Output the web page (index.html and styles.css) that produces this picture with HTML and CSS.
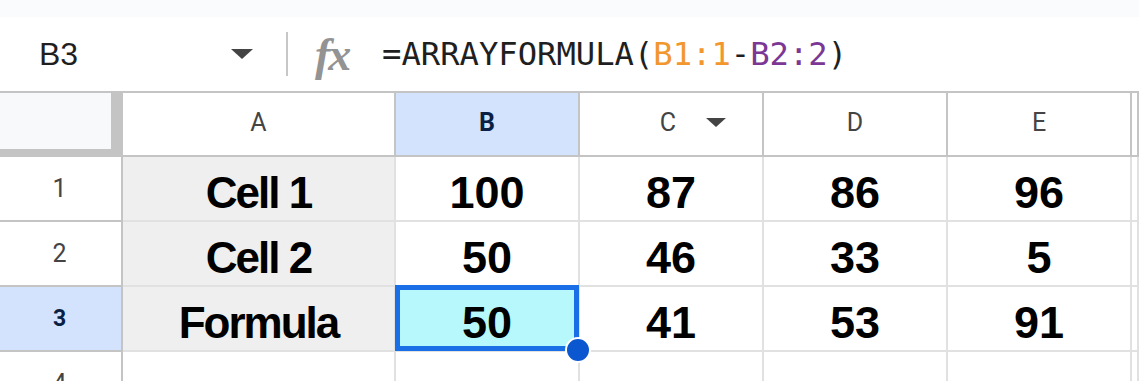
FILE: index.html
```html
<!DOCTYPE html>
<html lang="en">
<head>
    <meta charset="UTF-8">
    <meta name="viewport" content="width=device-width, initial-scale=1.0">
    <title>Sheet</title>
    <link rel="stylesheet" href="styles.css">
</head>
<body>
    <div class="top-strip"></div>

    <div class="formula-bar">
        <div class="name-box">
            <span class="cell-ref">B3</span>
            <span class="caret"></span>
        </div>
        <div class="divider"></div>
        <div class="fx">fx</div>
        <div class="formula">=ARRAYFORMULA(<span class="ref-orange">B1:1</span>-<span class="ref-purple">B2:2</span>)</div>
    </div>

    <div class="sheet">
        <div class="corner"></div>
        <div class="col-head">A</div>
        <div class="col-head active">B</div>
        <div class="col-head filter">C <span class="caret small"></span></div>
        <div class="col-head">D</div>
        <div class="col-head">E</div>
        <div class="col-head"></div>

        <div class="row-head">1</div>
        <div class="cell label">Cell 1</div>
        <div class="cell">100</div>
        <div class="cell">87</div>
        <div class="cell">86</div>
        <div class="cell">96</div>
        <div class="cell"></div>

        <div class="row-head">2</div>
        <div class="cell label">Cell 2</div>
        <div class="cell">50</div>
        <div class="cell">46</div>
        <div class="cell">33</div>
        <div class="cell">5</div>
        <div class="cell"></div>

        <div class="row-head active">3</div>
        <div class="cell label">Formula</div>
        <div class="cell selected">50</div>
        <div class="cell">41</div>
        <div class="cell">53</div>
        <div class="cell">91</div>
        <div class="cell"></div>

        <div class="row-head">4</div>
        <div class="cell"></div>
        <div class="cell"></div>
        <div class="cell"></div>
        <div class="cell"></div>
        <div class="cell"></div>
        <div class="cell"></div>
    </div>
</body>
</html>
```

FILE: styles.css
```css
/* General Reset */
* { margin: 0; padding: 0; box-sizing: border-box; }
body { font-family: "Liberation Sans", Arial, sans-serif; color: #1f1f1f; background: #fff; overflow: hidden; }

.top-strip { height: 17px; background-color: #f9fbfd; }

/* Formula bar */
.formula-bar { display: flex; align-items: center; height: 76px; border-bottom: 2px solid #c4c4c4; background: #fff; }
.name-box { display: flex; align-items: center; justify-content: space-between; width: 286px; padding: 0 33px 0 39px; }
.cell-ref { font-size: 32px; color: #1f1f1f; }
.caret { display: inline-block; width: 0; height: 0; border-left: 11px solid transparent; border-right: 11px solid transparent; border-top: 10px solid #444; }
.caret.small { border-left-width: 10px; border-right-width: 10px; border-top-width: 9px; margin-left: 30px; }
.divider { width: 2px; height: 44px; background-color: #c7c7c7; }
.fx { margin-left: 27px; width: 67px; font-family: "Liberation Serif", serif; font-style: italic; font-weight: bold; font-size: 46px; line-height: 1; color: #939393; letter-spacing: -2px; padding-top: 2px; }
.formula { font-family: "DejaVu Sans Mono", monospace; font-size: 32.2px; color: #1f1f1f; }
.ref-orange { color: #f2962e; }
.ref-purple { color: #7b3793; }

/* Grid */
.sheet { display: grid; grid-template-columns: 123px 273px 184px 184px 184px 184px 1fr; grid-template-rows: 64px 65px 65px 65px 65px; }
.corner { background-color: #f8f9fa; border-right: 12px solid #c4c4c4; border-bottom: 8px solid #c4c4c4; }
.col-head { display: flex; align-items: center; justify-content: center; font-family: Roboto, Arial, sans-serif; font-size: 25px; color: #444; border-right: 2px solid #c4c4c4; border-bottom: 2px solid #c4c4c4; padding-bottom: 4px; }
.col-head.filter { padding-left: 44px; }
.col-head.active, .row-head.active { background-color: #d3e3fd; color: #0a1f44; font-weight: bold; }
.row-head { display: flex; align-items: center; justify-content: center; font-family: Roboto, Arial, sans-serif; font-size: 25px; color: #444; border-right: 2px solid #c4c4c4; border-bottom: 2px solid #c4c4c4; padding-right: 2px; }
.row-head.active { font-size: 23px; }
.cell { display: flex; align-items: center; justify-content: center; font-size: 45px; font-weight: bold; color: #000; border-right: 2px solid #e1e1e1; border-bottom: 2px solid #e1e1e1; padding-top: 9px; }
.cell.label { background-color: #efefef; font-size: 44px; letter-spacing: -2px; }
.cell.selected { position: relative; background-color: #b6f8fb; }
.cell.selected::after { content: ""; position: absolute; top: -2px; left: -1px; right: -1px; bottom: -1px; border: 5px solid #1b6fe6; }
.cell.selected::before { content: ""; position: absolute; right: -13px; bottom: -13px; width: 22px; height: 22px; border-radius: 50%; background-color: #0b57d0; border: 2px solid #fff; z-index: 2; }
```
